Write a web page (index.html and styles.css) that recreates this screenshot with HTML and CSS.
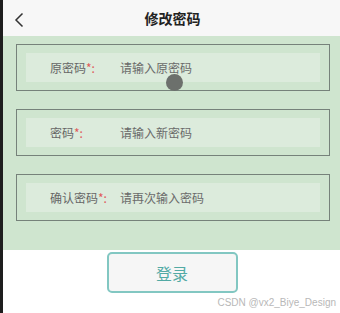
FILE: index.html
```html
<!DOCTYPE html>
<html lang="zh">

<head>
	<meta charset="UTF-8">
	<meta name="viewport" content="width=device-width, initial-scale=1.0">
	<title>修改密码</title>
	<link rel="stylesheet" href="styles.css">
</head>

<body>
	<div class="edge"></div>
	<div class="page">
		<header class="top-bar">
			<span class="back">
				<svg width="10" height="16" viewBox="0 0 10 16"><path d="M8.5 1.5 L2 8 L8.5 14.5" fill="none" stroke="#333" stroke-width="1.5"/></svg>
			</span>
			<h1>修改密码</h1>
		</header>
		<div class="form-zone">
			<div class="field">
				<div class="field-inner">
					<span class="label">原密码<em>*:</em></span>
					<span class="value">请输入原密码</span>
				</div>
				<span class="touch"></span>
			</div>
			<div class="field">
				<div class="field-inner">
					<span class="label">密码<em>*:</em></span>
					<span class="value">请输入新密码</span>
				</div>
			</div>
			<div class="field">
				<div class="field-inner">
					<span class="label">确认密码<em>*:</em></span>
					<span class="value">请再次输入密码</span>
				</div>
			</div>
		</div>
		<div class="actions">
			<button class="submit">登录</button>
		</div>
		<div class="watermark">CSDN @vx2_Biye_Design</div>
	</div>
</body>

</html>
```

FILE: styles.css
```css
body {
	margin: 0;
	display: flex;
	height: 313px;
	overflow: hidden;
	font-family: "Noto Sans CJK SC", "Noto Sans", sans-serif;
	background: #fff;
}

.edge {
	width: 3px;
	background: #1e1e1e;
	flex-shrink: 0;
}

.page {
	flex: 1;
	position: relative;
}

.top-bar {
	height: 36px;
	background: #f7f7f7;
	display: flex;
	align-items: center;
	justify-content: center;
	position: relative;
}

.back {
	position: absolute;
	left: 11px;
	top: 9px;
}

.top-bar h1 {
	margin: 0 0 0 2px;
	font-size: 14px;
	font-weight: bold;
	color: #222;
}

.form-zone {
	background: #cfe5cf;
	padding: 8px 10px 29px 13px;
	display: flex;
	flex-direction: column;
	gap: 18px;
}

.field {
	border: 1.5px solid #76827a;
	height: 45px;
	display: flex;
	align-items: center;
	padding: 0 9px;
	position: relative;
}

.field-inner {
	flex: 1;
	height: 29px;
	background: #dcebdc;
	display: flex;
	align-items: center;
	font-size: 12px;
	color: #666;
}

.label {
	width: 94px;
	padding-left: 24px;
	box-sizing: border-box;
}

.label em {
	font-style: normal;
	color: #e05a5a;
}

.value {
	color: #6a6a6a;
}

.touch {
	position: absolute;
	left: 149px;
	top: 29px;
	width: 17px;
	height: 17px;
	border-radius: 50%;
	background: #6c706c;
}

.actions {
	display: flex;
	justify-content: center;
	padding-top: 2px;
	padding-left: 1px;
}

.submit {
	width: 131px;
	height: 41px;
	border: 2px solid #82c7c2;
	border-radius: 5px;
	background: #f6f6f6;
	color: #52aaa5;
	font-size: 16px;
	font-family: "Noto Sans CJK SC", sans-serif;
}

.watermark {
	position: absolute;
	right: 4px;
	bottom: 5px;
	font-family: "Liberation Sans", sans-serif;
	font-size: 10px;
	color: #b8b8b8;
}
```
